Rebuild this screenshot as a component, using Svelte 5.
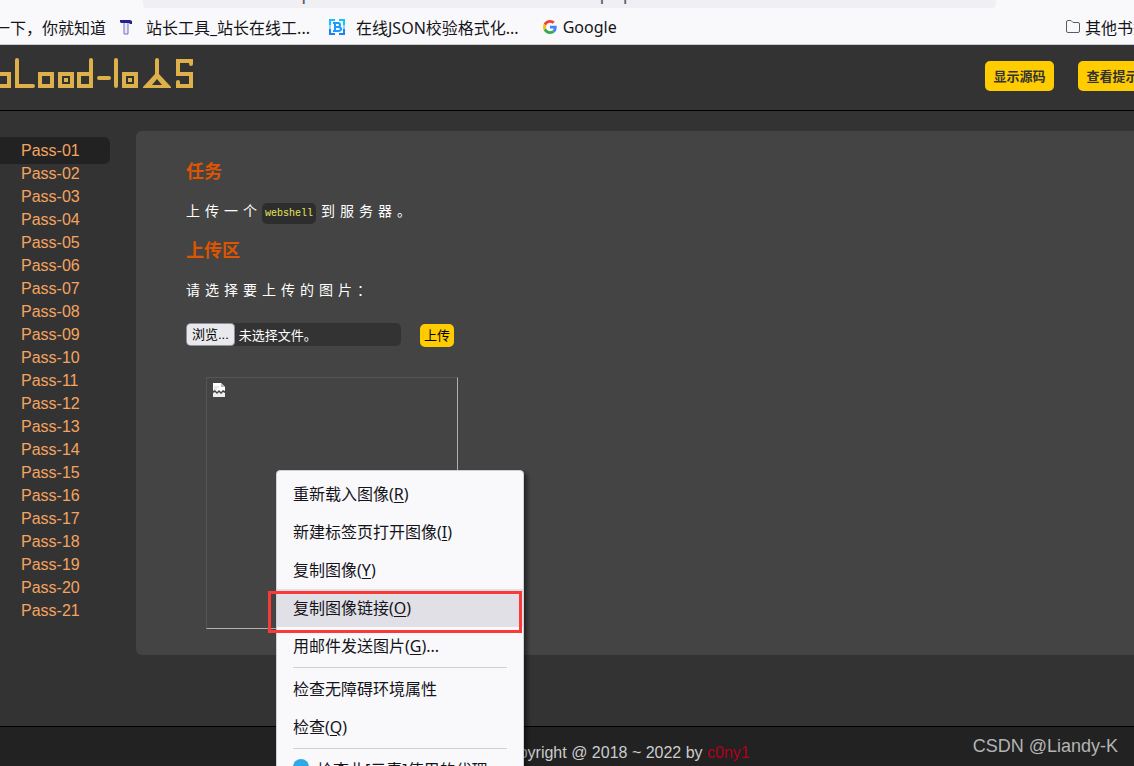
<script>
  const levels = Array.from({ length: 21 }, (_, i) => 'Pass-' + String(i + 1).padStart(2, '0'));
  let current = $state('Pass-01');
  let address = $state('127.0.0.1/upload-labs-master/Pass-01/index.php');
  let files = $state();

  // key is the underlined access key, null draws a separator
  const menu = [
    { text: '重新载入图像', key: 'R' },
    { text: '新建标签页打开图像', key: 'I' },
    { text: '复制图像', key: 'Y' },
    { text: '复制图像链接', key: 'O', marked: true },
    { text: '用邮件发送图片', key: 'G', tail: '...' },
    null,
    { text: '检查无障碍环境属性' },
    { text: '检查', key: 'Q' },
    null,
    { text: '检查此[元素]使用的代理', icon: true },
  ];
</script>

<div class="window">
  <div class="toolbar">
    <input class="address" aria-label="地址" bind:value={address} />
  </div>
  <nav class="bookmarks">
    <a class="first" href="#baidu">百度一下，你就知道</a>
    <a class="tools" href="#tools">
      <svg width="16" height="16" viewBox="0 0 16 16">
        <path d="M2 1H12L14 2V5H12L11 4H3L2 3Z" fill="#23238e" />
        <path d="M6 4V15H10V4" fill="#e8e8f8" stroke="#7070c0" />
      </svg>
      站长工具_站长在线工...
    </a>
    <a class="json" href="#json">
      <svg width="18" height="18" viewBox="0 0 18 18" fill="none" stroke="#1a9cff" stroke-width="2">
        <path d="M7 2H2V7M11 2H16V7" stroke="#10c4ff" />
        <path d="M2 7V11M16 7V11" stroke="#18b0ff" stroke-width="1" />
        <path d="M2 11V16H7M16 11V16H11" stroke="#1a80ff" />
        <path d="M5 5H10Q12 5 12 7T10 9H7M10 9Q13 9 13 11T10 13H5M7 5V13" />
      </svg>
      在线JSON校验格式化...
    </a>
    <a class="google" href="#google">
      <svg width="14" height="14" viewBox="0 0 48 48">
        <path fill="#ea4335" d="M24 9.500c3.540 0 6.710 1.220 9.210 3.600l6.850-6.850C35.900 2.380 30.470 0 24 0 14.620 0 6.510 5.380 2.560 13.220l7.980 6.190C12.430 13.720 17.740 9.500 24 9.500z" />
        <path fill="#4285f4" d="M46.980 24.550c0-1.570-.15-3.090-.38-4.550H24v9.020h12.940c-.58 2.960-2.260 5.480-4.780 7.180l7.730 6c4.510-4.180 7.090-10.360 7.090-17.650z" />
        <path fill="#fbbc05" d="M10.530 28.590c-.48-1.450-.76-2.990-.76-4.590s.27-3.140.76-4.590l-7.980-6.190C.92 16.460 0 20.120 0 24s.92 7.540 2.560 10.780z" />
        <path fill="#34a853" d="M24 48c6.480 0 11.930-2.130 15.890-5.810l-7.730-6c-2.150 1.450-4.920 2.300-8.160 2.300-6.260 0-11.570-4.220-13.470-9.910l-7.980 6.190C6.510 42.620 14.620 48 24 48z" />
      </svg>
      Google
    </a>
    <a class="others" href="#others">
      <svg width="16" height="16" viewBox="0 0 16 16" fill="none" stroke="#5b5b66">
        <path d="M1.500 3A1.500 1.500 0 0 1 3 1.500H6L8 3.500H13A1.500 1.500 0 0 1 14.500 5V12A1.500 1.500 0 0 1 13 13.500H3A1.500 1.500 0 0 1 1.500 12Z" />
      </svg>
      其他书签
    </a>
  </nav>

  <header>
    <svg class="logo" width="194" height="34" viewBox="0 0 194 34" role="img" aria-label="upload-labs" fill="none" stroke="#ddb04a" stroke-width="4">
      <path d="M-4 17H9V29H-4" />
      <path d="M17 3V29H33" stroke-linecap="round" />
      <rect x="40" y="17" width="12" height="12" />
      <rect x="60" y="17" width="12" height="12" />
      <rect x="64" y="21" width="4" height="4" fill="#ddb04a" stroke="none" />
      <path d="M91 3V29H79V17H91" stroke-linecap="round" />
      <path d="M99 21H109M116 3V29" stroke-linecap="round" />
      <rect x="124" y="17" width="12" height="12" />
      <rect x="128" y="21" width="4" height="4" fill="#ddb04a" stroke="none" />
      <path d="M157 3V18" stroke-linecap="round" />
      <path d="M155 17L143 30V31H171V30L159 17ZM157 22L162 28H152Z" fill="#ddb04a" fill-rule="evenodd" stroke="none" />
      <path d="M191 7V4H178V17H191V29H178V25" stroke-linecap="round" />
    </svg>
    <div class="actions">
      <button>显示源码</button>
      <button>查看提示</button>
    </div>
  </header>

  <main>
    <ul class="levels">
      {#each levels as level}
        <li>
          <a href="#{level}" class:active={level === current} onclick={() => (current = level)}>{level}</a>
        </li>
      {/each}
    </ul>

    <section class="panel">
      <h3>任务</h3>
      <p>上传一个<code>webshell</code>到服务器。</p>
      <h3>上传区</h3>
      <p>请选择要上传的图片：</p>
      <form onsubmit={(e) => e.preventDefault()}>
        <label class="file">
          <input type="file" bind:files />
          <span class="browse">浏览...</span>
          <span>{files?.length ? files[0].name : '未选择文件。'}</span>
        </label>
        <button class="upload">上传</button>
      </form>

      <div class="preview">
        <svg width="12" height="14" viewBox="0 0 12 14">
          <path d="M0 0H8L12 4V8L10 7L8 9L6 7L4 9L2 7L0 8Z" fill="#fff" />
          <path d="M8 0V4H12Z" fill="#b8b8b8" />
          <path d="M0 10L2 9L4 11L6 9L8 11L10 9L12 10V14H0Z" fill="#eee" />
          <path d="M1 4H6M1 6H4" stroke="#ccc" />
        </svg>

        <ul class="menu">
          {#each menu as item}
            {#if item}
              <li class:marked={item.marked}>
                <button>
                  {#if item.icon}<span class="dot"></span>{/if}{item.text}{#if item.key}(<u>{item.key}</u>){/if}{item.tail ?? ''}
                </button>
              </li>
            {:else}
              <li class="separator"></li>
            {/if}
          {/each}
        </ul>
      </div>
    </section>
  </main>

  <footer>
    <div class="copyright">Copyright @ 2018 ~ 2022 by <a href="#c0ny1">c0ny1</a></div>
    <div class="credit">CSDN @Liandy-K</div>
  </footer>
</div>

<style>
  :global(body) {
    margin: 0;
    background: #222;
  }

  .window {
    display: flex;
    flex-direction: column;
    height: 100vh;
    overflow: hidden;
    background: #333;
    font-family: "Liberation Sans", "Noto Sans CJK SC", sans-serif;
    font-size: 16px;
  }

  a {
    text-decoration: none;
  }

  button {
    border: none;
    font-family: inherit;
    cursor: pointer;
  }

  ul {
    list-style: none;
    margin: 0;
    padding: 0;
  }

  /* browser bars */
  .toolbar {
    display: flex;
    align-items: flex-end;
    flex: none;
    height: 8px;
    padding: 0 138px 0 143px;
    background: #f9f9fb;
  }

  .address {
    flex: 1;
    box-sizing: border-box;
    height: 32px;
    padding: 0 0 0 59px;
    border: none;
    border-radius: 4px;
    background: #f0f0f4;
    color: #5b5b66;
    font: 19px "Noto Sans", sans-serif;
  }

  .bookmarks {
    display: flex;
    align-items: center;
    flex: none;
    box-sizing: border-box;
    height: 37px;
    padding-top: 2px;
    border-bottom: 1px solid #ccc;
    background: #f9f9fb;
    font-family: "Noto Sans", "Noto Sans CJK SC", sans-serif;
    white-space: nowrap;
  }

  .bookmarks a {
    display: flex;
    align-items: center;
    gap: 8px;
    height: 32px;
    color: #15141a;
  }

  .bookmarks .first {
    margin-left: -38px;
  }

  .bookmarks .tools {
    gap: 12px;
    margin-left: 12px;
  }

  .bookmarks .json {
    gap: 10px;
    margin-left: 18px;
  }

  .bookmarks .google {
    margin-left: 24px;
    gap: 6px;
  }

  .bookmarks .others {
    gap: 4px;
    margin: 0 -15px 0 auto;
  }

  /* site header */
  header {
    display: flex;
    justify-content: space-between;
    align-items: flex-start;
    flex: none;
    box-sizing: border-box;
    height: 66px;
    padding-top: 12px;
    border-bottom: 1px solid #000;
  }

  .actions {
    display: flex;
    gap: 24px;
    margin: 4px -13px 0 0;
  }

  .actions button {
    min-width: 69px;
    height: 30px;
    padding: 0 8px 2px;
    border-radius: 5px;
    background: #fc0;
    color: #333;
    font-size: 13px;
    font-weight: bold;
  }

  main {
    display: flex;
    align-items: flex-start;
    flex: 1;
    gap: 26px;
    padding: 20px 0 71px;
  }

  .levels {
    flex: none;
    width: 110px;
    padding-top: 8px;
  }

  .levels li {
    display: flex;
    align-items: center;
    height: 23px;
  }

  .levels a {
    flex: 1;
    padding-left: 21px;
    color: #f4a460;
    line-height: 23px;
  }

  .levels .active {
    padding-top: 2px;
    padding-bottom: 2px;
    border-radius: 0 6px 6px 0;
    background: #222;
  }

  .panel {
    flex: 1;
    padding: 30px 50px 26px;
    border-radius: 6px 0 0 6px;
    background: #444;
    color: #fff;
  }

  h3 {
    margin: 0;
    color: #d50;
    font-size: 18px;
    line-height: 22px;
  }

  p {
    margin: 16px 0 17px;
    font-size: 14px;
    letter-spacing: 5px;
    line-height: 24px;
  }

  code {
    margin-right: 5px;
    padding: 5px 3px;
    border-radius: 5px;
    background: #2d2d2d;
    color: #e6e65a;
    font-family: "Liberation Mono", monospace;
    font-size: 10px;
    letter-spacing: 0;
    line-height: 12px;
  }

  form {
    display: flex;
    gap: 19px;
    padding-top: 4px;
  }

  .file {
    display: flex;
    align-items: center;
    gap: 4px;
    width: 215px;
    height: 23px;
    border-radius: 5px;
    background: #333;
    font-size: 13px;
    overflow: hidden;
    white-space: nowrap;
  }

  .file input {
    width: 0;
    margin-right: -4px;
    opacity: 0;
  }

  .browse {
    box-sizing: border-box;
    height: 23px;
    padding: 0 5px;
    border: 1px solid #8f8f9d;
    border-radius: 4px;
    background: #e9e9ed;
    color: #000;
    line-height: 21px;
  }

  .upload {
    height: 23px;
    margin-top: 1px;
    padding: 0 4px 2px;
    border-radius: 5px;
    background: #fc0;
    color: #000;
    font-size: 13px;
  }

  .preview {
    position: relative;
    box-sizing: border-box;
    width: 252px;
    height: 252px;
    margin: 30px 0 0 20px;
    padding: 5px 6px;
    border: 1px solid;
    border-color: #555 #b0b0b0 #b0b0b0 #555;
  }

  /* context menu, open over the preview image */
  .menu {
    position: absolute;
    top: 92px;
    left: 69px;
    box-sizing: border-box;
    width: 248px;
    padding: 4px 0;
    border: 1px solid #cfcfd8;
    border-radius: 4px;
    background: #f9f9fb;
    box-shadow: 3px 3px 4px rgba(0, 0, 0, 0.5);
    font-family: "Noto Sans", "Noto Sans CJK SC", sans-serif;
  }

  .menu li {
    position: relative;
  }

  .menu button {
    display: block;
    width: 100%;
    height: 38px;
    padding: 0 16px 2px;
    background: none;
    color: #15141a;
    font-size: 16px;
    text-align: left;
    white-space: nowrap;
  }

  .menu u {
    text-underline-offset: 2px;
  }

  .menu .marked {
    background: #e0e0e6;
  }

  .menu .marked::after {
    content: "";
    position: absolute;
    inset: 2px 1px -6px -9px;
    z-index: 1;
    border: 3px solid #f93a37;
    pointer-events: none;
  }

  .menu .separator {
    height: 1px;
    margin: 2px 16px;
    background: #cfcfd8;
  }

  .dot {
    display: inline-block;
    width: 16px;
    height: 16px;
    margin-right: 8px;
    border-radius: 50%;
    background: #30a8e8;
    vertical-align: text-top;
  }

  footer {
    display: grid;
    grid-template-columns: 1fr auto 1fr;
    align-items: center;
    flex: none;
    box-sizing: border-box;
    height: 40px;
    border-top: 1px solid #000;
    background: #222;
  }

  /* centred on the page, which is wider than the window */
  .copyright {
    grid-column: 2;
    padding: 12px 0 0 114px;
    color: #ccc;
  }

  .copyright a {
    color: #b0001e;
  }

  .credit {
    justify-self: end;
    padding-right: 16px;
    color: #b4b4b4;
    font-size: 18px;
  }
</style>
